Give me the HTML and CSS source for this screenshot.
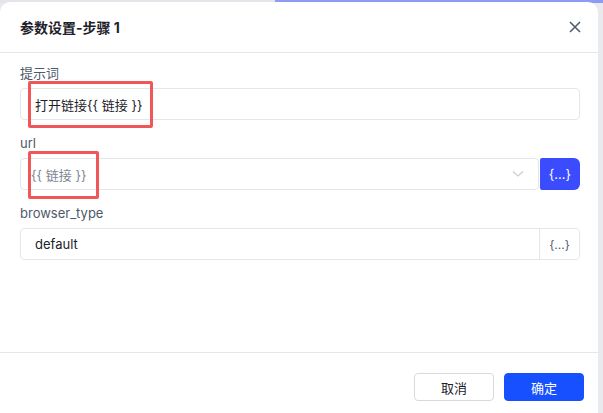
FILE: index.html
```html
<!DOCTYPE html>
<html lang="zh-CN">
<head>
    <meta charset="UTF-8">
    <meta name="viewport" content="width=device-width, initial-scale=1.0">
    <title>参数设置</title>
    <link rel="stylesheet" href="styles.css">
</head>
<body>
    <div class="modal">
        <div class="modal-header">
            <div class="modal-title">参数设置-步骤 1</div>
            <svg class="close" width="12" height="12" viewBox="0 0 12 12">
                <path d="M1 1L11 11M11 1L1 11" stroke="#4e5969" stroke-width="1.5" fill="none"/>
            </svg>
        </div>

        <div class="modal-body">
            <div class="field">
                <div class="label">提示词</div>
                <div class="input">打开链接{{ 链接 }}</div>
                <div class="mark mark-prompt"></div>
            </div>

            <div class="field">
                <div class="label">url</div>
                <div class="row">
                    <div class="select">
                        <span class="placeholder">{{ 链接 }}</span>
                        <svg class="arrow" width="12" height="8" viewBox="0 0 12 8">
                            <path d="M1 1.5L6 6L11 1.5" stroke="#c9cdd4" stroke-width="1.2" fill="none"/>
                        </svg>
                    </div>
                    <button class="var-btn active">{...}</button>
                </div>
                <div class="mark mark-url"></div>
            </div>

            <div class="field">
                <div class="label">browser_type</div>
                <div class="row boxed">
                    <div class="input plain">default</div>
                    <button class="var-btn">{...}</button>
                </div>
            </div>
        </div>

        <div class="modal-footer">
            <button class="btn">取消</button>
            <button class="btn primary">确定</button>
        </div>
    </div>
</body>
</html>
```

FILE: styles.css
```css
body {
    margin: 0;
    height: 413px;
    overflow: hidden;
    font-family: Inter, "Noto Sans CJK SC", sans-serif;
    background: linear-gradient(to right, #e4e5ea 275px, #8f9bf2 275px) top left / 100% 3px no-repeat, #e9eaef;
}
.modal {
    width: 598px;
    height: 411px;
    margin-top: 2px;
    background-color: #fff;
    border-radius: 10px 10px 0 0;
    display: flex;
    flex-direction: column;
}
.modal-header {
    height: 50px;
    padding: 0 17px 0 20px;
    border-bottom: 1px solid #e5e6eb;
    display: flex;
    align-items: center;
    justify-content: space-between;
}
.modal-title {
    font-size: 14px;
    font-weight: 700;
    color: #1d2129;
}
.modal-body {
    flex: 1;
    padding: 10px 18px 0 20px;
}
.field {
    position: relative;
    margin-bottom: 13px;
}
.label {
    font-size: 13px;
    line-height: 20px;
    color: #4e5969;
    margin-bottom: 5px;
}
.input {
    height: 30px;
    border: 1px solid #e5e6eb;
    border-radius: 4px;
    padding: 0 14px;
    display: flex;
    align-items: center;
    font-size: 13px;
    color: #1d2129;
}
.row {
    display: flex;
    height: 32px;
}
.select {
    flex: 1;
    border: 1px solid #e5e6eb;
    border-radius: 4px;
    padding: 0 14px 0 10px;
    display: flex;
    align-items: center;
    justify-content: space-between;
    font-size: 13px;
}
.placeholder {
    color: #7d8592;
}
.var-btn {
    width: 40px;
    border: none;
    padding: 0;
    font-family: inherit;
    font-size: 12px;
    color: #4e5969;
    background-color: #fff;
}
.var-btn.active {
    margin-left: 1px;
    background-color: #3a4cfd;
    color: #fff;
    font-size: 13px;
    border-radius: 2px 6px 6px 2px;
}
.row.boxed {
    border: 1px solid #e5e6eb;
    border-radius: 4px;
    height: 30px;
}
.input.plain {
    flex: 1;
    border: none;
    border-right: 1px solid #e5e6eb;
    border-radius: 0;
}
.row.boxed .var-btn {
    width: 39px;
    border-radius: 0 4px 4px 0;
}
.mark {
    position: absolute;
    border: 3px solid #f25757;
    border-radius: 2px;
}
.mark-prompt {
    left: 8px;
    top: 18px;
    width: 119px;
    height: 41px;
}
.mark-url {
    left: 8px;
    top: 18px;
    width: 65px;
    height: 42px;
}
.modal-footer {
    height: 61px;
    border-top: 1px solid #e5e6eb;
    padding: 20px 14px 0 0;
    display: flex;
    justify-content: flex-end;
    align-items: flex-start;
    gap: 10px;
    box-sizing: border-box;
}
.btn {
    width: 80px;
    height: 28px;
    border: 1px solid #d6d9e0;
    border-radius: 4px;
    background-color: #fff;
    font-family: inherit;
    font-size: 13px;
    color: #1d2129;
}
.btn.primary {
    border-color: #1650ff;
    background-color: #1650ff;
    color: #fff;
}
```
